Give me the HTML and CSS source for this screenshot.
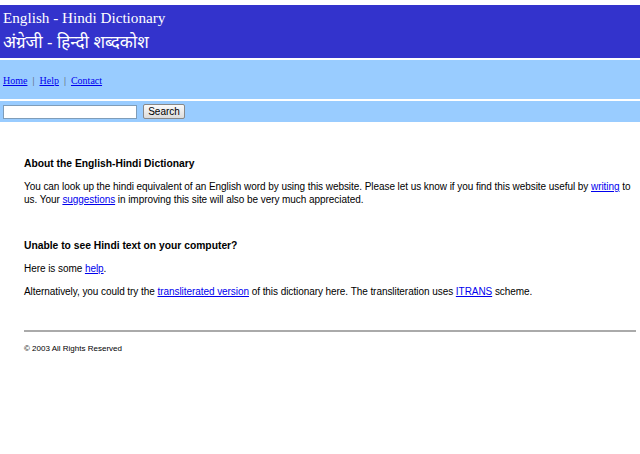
FILE: index.html
```html
<!DOCTYPE html>
<html>
<head>
<meta charset="utf-8">
<title>English - Hindi Dictionary</title>
<link rel="stylesheet" href="styles.css">
</head>
<body>
<div class="header">
  <div class="title-en">English - Hindi Dictionary</div>
  <div class="title-hi">अंग्रेजी - हिन्दी शब्दकोश</div>
</div>
<div class="nav">
  <a href="#">Home</a><span class="sep">|</span><a href="#">Help</a><span class="sep">|</span><a href="#">Contact</a>
</div>
<div class="searchbar">
  <input class="search-input" type="text">
  <button class="search-btn" type="button">Search</button>
</div>
<div class="content">
  <h3 class="heading first">About the English-Hindi Dictionary</h3>
  <p class="para">You can look up the hindi equivalent of an English word by using this website. Please let us know if you find this website useful by <a href="#">writing</a> to us. Your <a href="#">suggestions</a> in improving this site will also be very much appreciated.</p>
  <h3 class="heading second">Unable to see Hindi text on your computer?</h3>
  <p class="para">Here is some <a href="#">help</a>.</p>
  <p class="para">Alternatively, you could try the <a href="#">transliterated version</a> of this dictionary here. The transliteration uses <a href="#">ITRANS</a> scheme.</p>
  <hr class="rule">
  <p class="footer">© 2003 All Rights Reserved</p>
</div>
</body>
</html>
```

FILE: styles.css
```css
html, body {
  margin: 0;
  padding: 0;
  background: #ffffff;
}
body {
  padding-top: 5px;
  font-family: "Liberation Sans", Arial, sans-serif;
  color: #000000;
}
a {
  color: #0000ee;
}
.header {
  background: #3333cc;
  color: #ffffff;
  height: 53px;
  padding: 0 3px;
  box-sizing: border-box;
}
.title-en {
  font-family: "Liberation Serif", "Times New Roman", serif;
  font-size: 15.2px;
  line-height: 18px;
  padding-top: 4px;
}
.title-hi {
  font-family: "Noto Sans", "Liberation Serif", serif;
  font-size: 17px;
  line-height: 22px;
  padding-top: 4px;
}
.nav {
  margin-top: 2px;
  background: #99ccff;
  height: 39px;
  padding: 1px 3px 0 3px;
  box-sizing: border-box;
  display: flex;
  align-items: center;
  font-family: "Liberation Serif", "Times New Roman", serif;
  font-size: 10px;
}
.sep {
  color: #555555;
  margin: 0 5px;
}
.searchbar {
  margin-top: 2px;
  background: #99ccff;
  height: 21px;
  padding: 0 3px;
  display: flex;
  align-items: center;
  gap: 6px;
}
.search-input {
  width: 134px;
  height: 14px;
  box-sizing: border-box;
  border: 1px solid #7f9db9;
  padding: 0;
  margin: 0;
  background: #ffffff;
}
.search-btn {
  height: 15px;
  width: 42px;
  box-sizing: border-box;
  padding: 0;
  margin: 0;
  font-family: "Liberation Sans", Arial, sans-serif;
  font-size: 10px;
  border: 1px solid #888888;
  border-radius: 2px;
  background: linear-gradient(#fafafa, #dcdcdc);
  color: #000;
}
.content {
  padding: 0 0 0 24px;
  font-size: 10px;
  line-height: 13px;
  letter-spacing: -0.06px;
}
.heading {
  font-size: 10.3px;
  font-weight: bold;
  margin: 0;
  letter-spacing: 0;
}
.heading.first {
  margin-top: 35px;
}
.heading.second {
  margin-top: 33px;
}
.para {
  margin: 10px 0 0 0;
}
.rule {
  margin: 32px 4px 0 0;
  border: 0;
  height: 2px;
  background: #aaaaaa;
}
.footer {
  font-size: 8px;
  letter-spacing: 0;
  margin: 10px 0 0 0;
}
```
